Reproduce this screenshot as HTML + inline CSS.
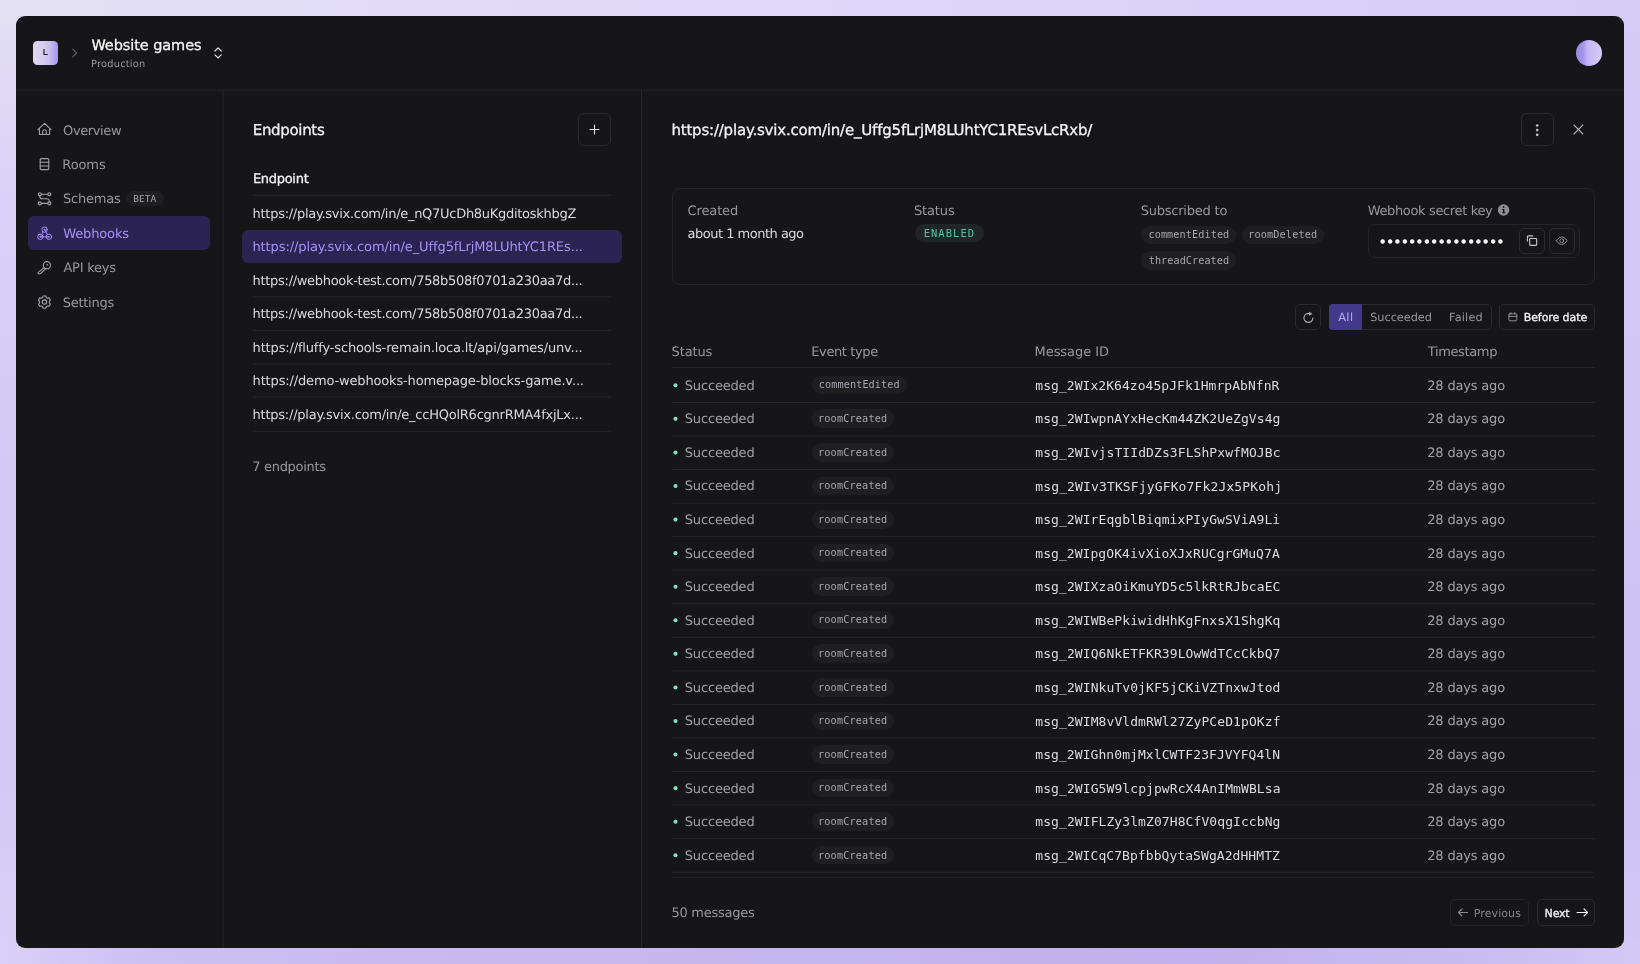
<!DOCTYPE html>
<html lang="en">
<head>
<meta charset="utf-8">
<title>Webhooks – Website games</title>
<style>
*{box-sizing:border-box;margin:0;padding:0}
html,body{width:1640px;height:964px;overflow:hidden}
body{
  font-family:"DejaVu Sans","Liberation Sans",sans-serif;font-size:13px;color:#e0e0e4;
  background:
    linear-gradient(90deg,#e3e0f4 0%,#e1dbf8 25%,#dfd8f9 49%,#d9cef7 85%,#d7ccf6 100%) no-repeat 0 0/100% 24px,
    linear-gradient(90deg,#d9d0f7 0%,#ccc0f3 9%,#c8baee 24%,#c4b6ee 49%,#c1b1ee 73%,#c9bdf1 91.5%,#d4c9f4 100%) no-repeat 0 100%/100% 24px,
    linear-gradient(180deg,#e3e0f4 0%,#dbd0f8 21%,#d4c9f4 49%,#d3c8f4 78%,#d9d0f7 100%) no-repeat 0 0/24px 100%,
    linear-gradient(180deg,#d7ccf6 0%,#d4c9f4 20%,#d1c5f4 50%,#cdc1f3 79%,#d0c5f4 92%,#d4c9f4 100%) no-repeat 100% 0/24px 100%,
    #161618;
  position:relative;
}
.abs{position:absolute}
#app{position:absolute;left:16px;top:16px;width:1608px;height:932px;background:#161618;border-radius:9px;overflow:hidden}
#pg{position:absolute;left:-16px;top:-16px;width:1640px;height:964px;will-change:transform}
.t{position:absolute;white-space:nowrap;line-height:20px;height:20px;text-rendering:geometricPrecision}
.hline{position:absolute;height:1px;background:#252528}
.vline{position:absolute;width:1px;background:#252528}
.mono{font-family:"DejaVu Sans Mono","Liberation Mono",monospace;text-rendering:auto}
.btn{position:absolute;border:1px solid #2b2b2f;border-radius:6px}
.pill{position:absolute;border-radius:10px;background:#1f1f22}
.pt{position:absolute;white-space:nowrap;line-height:20px;height:20px;font-family:"DejaVu Sans Mono","Liberation Mono",monospace;font-size:10.2px;color:#b0b0b6}
.dot{position:absolute;left:673.2px;width:4.4px;height:4.4px;border-radius:50%;background:#7ee2c4}
svg{position:absolute;overflow:visible}
</style>
</head>
<body>
<div id="app"><div id="pg">

<div class="abs" style="left:33.2px;top:40.7px;width:24.7px;height:24.3px;border-radius:4.5px;background:linear-gradient(90deg,#dcd7ee 0%,#d6cdf0 40%,#c9bdee 66%,#a693f2 100%)"></div>
<div class="t" style="left:33.5px;top:42px;width:24px;text-align:center;font-family:'Liberation Sans',sans-serif;font-size:8.8px;font-weight:700;color:#2a2a2e">L</div>
<div class="abs" style="left:1576px;top:40px;width:26px;height:26px;border-radius:50%;background:linear-gradient(90deg,#9c8be9 0%,#a092ea 25%,#c3b5f3 45%,#cdc2f6 75%,#d6cdf8 100%)"></div>
<div class="abs" style="left:28px;top:216px;width:182px;height:34px;border-radius:6px;background:#2b2352"></div>
<div class="abs" style="left:126px;top:191px;width:38px;height:15px;border-radius:8px;background:#1f1f22"></div>
<div class="btn" style="left:578px;top:113px;width:33px;height:33px"></div>
<div class="abs" style="left:242px;top:230px;width:380px;height:33px;border-radius:6px;background:#2b2352"></div>
<div class="btn" style="left:1521px;top:113px;width:33px;height:33px"></div>
<div class="abs" style="left:672px;top:188px;width:923px;height:97px;border:1px solid #252528;border-radius:8px"></div>
<div class="abs" style="left:914.5px;top:224px;width:69px;height:18.4px;border-radius:10px;background:#222527"></div>
<div class="abs" style="left:1368px;top:224px;width:212px;height:34px;border:1px solid #252528;border-radius:7px"></div>
<div class="btn" style="left:1519px;top:228px;width:26px;height:26px;border-radius:5px"></div>
<div class="btn" style="left:1549px;top:228px;width:26px;height:26px;border-radius:5px"></div>
<div class="t" id="bullets" style="left:1379.8px;top:232px;font-family:'Liberation Sans',sans-serif;font-size:16.5px;letter-spacing:1.585px;color:#fafafa">•••••••••••••••••</div>
<div class="btn" style="left:1295px;top:304px;width:26px;height:26px;border-radius:5px"></div>
<div class="btn" style="left:1328.5px;top:304px;width:163px;height:26px;border-radius:5px"></div><div class="abs" style="left:1329px;top:304px;width:32.7px;height:26px;border-radius:4px 0 0 4px;background:#43398a"></div>
<div class="btn" style="left:1499px;top:304px;width:96px;height:26px;border-radius:5px"></div>
<div class="btn" style="left:1450px;top:899px;width:79px;height:27px;border-radius:5px;border-color:#242427"></div>
<div class="btn" style="left:1537px;top:899px;width:58px;height:27px;border-radius:5px"></div>
<svg style="left:0;top:0" width="1640" height="964" viewBox="0 0 1640 964"><rect x="16" y="89.2" width="1608" height="2" fill="#1f1f22"/><rect x="222.1" y="91" width="2" height="857" fill="#1f1f22"/><rect x="641" y="90.5" width="1" height="857.5" fill="#252528"/><rect x="253" y="194.80" width="358" height="1" fill="#27272a"/><rect x="253" y="296.30" width="358" height="1" fill="#27272a"/><rect x="253" y="329.90" width="358" height="1" fill="#27272a"/><rect x="253" y="363.50" width="358" height="1" fill="#27272a"/><rect x="253" y="396.60" width="358" height="1" fill="#27272a"/><rect x="253" y="430.80" width="358" height="1" fill="#27272a"/><rect x="671.7" y="367.00" width="923.3" height="1" fill="#27272a"/><rect x="671.7" y="401.95" width="923.3" height="1" fill="#27272a"/><rect x="671.7" y="435.50" width="923.3" height="1" fill="#27272a"/><rect x="671.7" y="469.06" width="923.3" height="1" fill="#27272a"/><rect x="671.7" y="502.62" width="923.3" height="1" fill="#27272a"/><rect x="671.7" y="536.17" width="923.3" height="1" fill="#27272a"/><rect x="671.7" y="569.73" width="923.3" height="1" fill="#27272a"/><rect x="671.7" y="603.28" width="923.3" height="1" fill="#27272a"/><rect x="671.7" y="636.84" width="923.3" height="1" fill="#27272a"/><rect x="671.7" y="670.39" width="923.3" height="1" fill="#27272a"/><rect x="671.7" y="703.94" width="923.3" height="1" fill="#27272a"/><rect x="671.7" y="737.50" width="923.3" height="1" fill="#27272a"/><rect x="671.7" y="771.06" width="923.3" height="1" fill="#27272a"/><rect x="671.7" y="804.61" width="923.3" height="1" fill="#27272a"/><rect x="671.7" y="838.16" width="923.3" height="1" fill="#27272a"/><rect x="671.7" y="871.72" width="923.3" height="1" fill="#27272a"/><rect x="671.7" y="876.90" width="923.3" height="1" fill="#27272a"/></svg>
<svg style="left:0;top:0" width="1640" height="964" viewBox="0 0 1640 964" fill="#7ee2c4"><circle cx="675.5" cy="385.30" r="2.05"/><circle cx="675.5" cy="418.87" r="2.05"/><circle cx="675.5" cy="452.44" r="2.05"/><circle cx="675.5" cy="486.01" r="2.05"/><circle cx="675.5" cy="519.58" r="2.05"/><circle cx="675.5" cy="553.15" r="2.05"/><circle cx="675.5" cy="586.72" r="2.05"/><circle cx="675.5" cy="620.29" r="2.05"/><circle cx="675.5" cy="653.86" r="2.05"/><circle cx="675.5" cy="687.43" r="2.05"/><circle cx="675.5" cy="721.00" r="2.05"/><circle cx="675.5" cy="754.57" r="2.05"/><circle cx="675.5" cy="788.14" r="2.05"/><circle cx="675.5" cy="821.71" r="2.05"/><circle cx="675.5" cy="855.28" r="2.05"/></svg>
<div class="pill" style="left:1141.3px;top:225.5px;width:94.7px;height:18.5px"></div>
<div class="pill" style="left:1242.0px;top:225.5px;width:82.4px;height:18.5px"></div>
<div class="pill" style="left:1141.3px;top:251.0px;width:94.7px;height:18.5px"></div>
<div class="pill" style="left:811.8px;top:375.8px;width:95.0px;height:18.6px"></div>
<div class="pill" style="left:811.8px;top:409.4px;width:82.2px;height:18.6px"></div>
<div class="pill" style="left:811.8px;top:443.0px;width:82.2px;height:18.6px"></div>
<div class="pill" style="left:811.8px;top:476.5px;width:82.2px;height:18.6px"></div>
<div class="pill" style="left:811.8px;top:510.1px;width:82.2px;height:18.6px"></div>
<div class="pill" style="left:811.8px;top:543.7px;width:82.2px;height:18.6px"></div>
<div class="pill" style="left:811.8px;top:577.3px;width:82.2px;height:18.6px"></div>
<div class="pill" style="left:811.8px;top:610.9px;width:82.2px;height:18.6px"></div>
<div class="pill" style="left:811.8px;top:644.4px;width:82.2px;height:18.6px"></div>
<div class="pill" style="left:811.8px;top:678.0px;width:82.2px;height:18.6px"></div>
<div class="pill" style="left:811.8px;top:711.6px;width:82.2px;height:18.6px"></div>
<div class="pill" style="left:811.8px;top:745.2px;width:82.2px;height:18.6px"></div>
<div class="pill" style="left:811.8px;top:778.8px;width:82.2px;height:18.6px"></div>
<div class="pill" style="left:811.8px;top:812.3px;width:82.2px;height:18.6px"></div>
<div class="pill" style="left:811.8px;top:845.9px;width:82.2px;height:18.6px"></div>
<div class="t" id="htitle" style="left:91.38px;top:36.01px;font-size:14.5px;color:#f4f4f5;letter-spacing:-0.077px;-webkit-text-stroke:.3px currentColor;">Website games</div>
<div class="t" id="hsub" style="left:91.10px;top:55.01px;font-size:9.8px;color:#97979e;letter-spacing:0.213px;">Production</div>
<div class="t" id="n1" style="left:63.04px;top:122.01px;font-size:13px;color:#97979e;letter-spacing:-0.387px;">Overview</div>
<div class="t" id="n2" style="left:62.35px;top:156.00px;font-size:13px;color:#97979e;letter-spacing:-0.111px;">Rooms</div>
<div class="t" id="n3" style="left:63.01px;top:190.01px;font-size:13px;color:#97979e;letter-spacing:-0.229px;">Schemas</div>
<div class="t mono" id="beta" style="left:133.13px;top:189.01px;font-size:9.5px;color:#a1a1aa;letter-spacing:0.112px;">BETA</div>
<div class="t" id="n4" style="left:63.16px;top:225.01px;font-size:13px;color:#a792f8;letter-spacing:-0.118px;">Webhooks</div>
<div class="t" id="n5" style="left:63.45px;top:259.01px;font-size:13px;color:#97979e;letter-spacing:-0.230px;">API keys</div>
<div class="t" id="n6" style="left:62.68px;top:294.01px;font-size:13px;color:#97979e;letter-spacing:-0.259px;">Settings</div>
<div class="t" id="eptitle" style="left:252.77px;top:120.00px;font-size:15px;color:#f4f4f5;letter-spacing:-0.327px;-webkit-text-stroke:.3px currentColor;">Endpoints</div>
<div class="t" id="ephdr" style="left:252.95px;top:170.01px;font-size:13px;color:#f4f4f5;letter-spacing:-0.296px;-webkit-text-stroke:.3px currentColor;">Endpoint</div>
<div class="t" id="ep0" style="left:252.60px;top:205.01px;font-size:13px;color:#dadade;letter-spacing:-0.282px;">https://play.svix.com/in/e_nQ7UcDh8uKgditoskhbgZ</div>
<div class="t" id="ep1" style="left:252.42px;top:238.01px;font-size:13px;color:#a792f8;letter-spacing:-0.092px;">https://play.svix.com/in/e_Uffg5fLrjM8LUhtYC1REs...</div>
<div class="t" id="ep2" style="left:252.60px;top:272.01px;font-size:13px;color:#dadade;letter-spacing:-0.301px;">https://webhook-test.com/758b508f0701a230aa7d...</div>
<div class="t" id="ep3" style="left:252.60px;top:305.01px;font-size:13px;color:#dadade;letter-spacing:-0.301px;">https://webhook-test.com/758b508f0701a230aa7d...</div>
<div class="t" id="ep4" style="left:252.60px;top:339.01px;font-size:13px;color:#dadade;letter-spacing:-0.161px;">https://fluffy-schools-remain.loca.lt/api/games/unv...</div>
<div class="t" id="ep5" style="left:252.60px;top:372.01px;font-size:13px;color:#dadade;letter-spacing:-0.154px;">https://demo-webhooks-homepage-blocks-game.v...</div>
<div class="t" id="ep6" style="left:252.60px;top:406.01px;font-size:13px;color:#dadade;letter-spacing:-0.237px;">https://play.svix.com/in/e_ccHQolR6cgnrRMA4fxjLx...</div>
<div class="t" id="epcount" style="left:252.18px;top:458.01px;font-size:13px;color:#97979e;letter-spacing:-0.296px;">7 endpoints</div>
<div class="t" id="dtitle" style="left:671.42px;top:120.01px;font-size:15px;color:#f4f4f5;letter-spacing:-0.198px;-webkit-text-stroke:.3px currentColor;">https://play.svix.com/in/e_Uffg5fLrjM8LUhtYC1REsvLcRxb/</div>
<div class="t" id="c1" style="left:687.52px;top:202.01px;font-size:13px;color:#97979e;letter-spacing:-0.119px;">Created</div>
<div class="t" id="c1v" style="left:687.47px;top:225.01px;font-size:13px;color:#dadade;letter-spacing:-0.496px;">about 1 month ago</div>
<div class="t" id="c2" style="left:913.91px;top:202.01px;font-size:13px;color:#97979e;letter-spacing:-0.131px;">Status</div>
<div class="t mono" id="enabled" style="left:923.64px;top:223.00px;font-size:10.5px;color:#5cbf9f;letter-spacing:1.029px;">ENABLED</div>
<div class="t" id="c3" style="left:1140.68px;top:202.01px;font-size:13px;color:#97979e;letter-spacing:-0.218px;">Subscribed to</div>
<div class="t" id="c4" style="left:1367.65px;top:202.01px;font-size:13px;color:#97979e;letter-spacing:-0.354px;">Webhook secret key</div>
<div class="t" id="fall" style="left:1338.18px;top:308.01px;font-size:11.3px;color:#b9a9ff;letter-spacing:0.425px;">All</div>
<div class="t" id="fsuc" style="left:1370.20px;top:308.01px;font-size:11.3px;color:#97979e;letter-spacing:-0.032px;">Succeeded</div>
<div class="t" id="ffail" style="left:1449.02px;top:308.01px;font-size:11.3px;color:#97979e;letter-spacing:0.175px;">Failed</div>
<div class="t" id="fdate" style="left:1523.70px;top:308.00px;font-size:11px;color:#f4f4f5;letter-spacing:-0.080px;-webkit-text-stroke:.3px currentColor;">Before date</div>
<div class="t" id="th1" style="left:671.59px;top:343.01px;font-size:13px;color:#97979e;letter-spacing:-0.148px;">Status</div>
<div class="t" id="th2" style="left:811.31px;top:343.01px;font-size:13px;color:#97979e;letter-spacing:-0.393px;">Event type</div>
<div class="t" id="th3" style="left:1034.53px;top:343.01px;font-size:13px;color:#97979e;letter-spacing:-0.047px;">Message ID</div>
<div class="t" id="th4" style="left:1427.74px;top:343.01px;font-size:13px;color:#97979e;letter-spacing:-0.359px;">Timestamp</div>
<div class="t" id="rs0" style="left:684.80px;top:377.01px;font-size:13px;color:#a0a0a6;letter-spacing:-0.174px;">Succeeded</div>
<div class="t mono" id="rm0" style="left:1035.26px;top:376.01px;font-size:13px;color:#dcdce0;letter-spacing:0.052px;">msg_2WIx2K64zo45pJFk1HmrpAbNfnR</div>
<div class="t" id="rt0" style="left:1427.26px;top:377.01px;font-size:13px;color:#a0a0a6;letter-spacing:-0.178px;">28 days ago</div>
<div class="t" id="rs1" style="left:684.80px;top:410.01px;font-size:13px;color:#a0a0a6;letter-spacing:-0.174px;">Succeeded</div>
<div class="t mono" id="rm1" style="left:1035.26px;top:409.01px;font-size:13px;color:#dcdce0;letter-spacing:0.085px;">msg_2WIwpnAYxHecKm44ZK2UeZgVs4g</div>
<div class="t" id="rt1" style="left:1427.26px;top:410.01px;font-size:13px;color:#a0a0a6;letter-spacing:-0.178px;">28 days ago</div>
<div class="t" id="rs2" style="left:684.80px;top:444.00px;font-size:13px;color:#a0a0a6;letter-spacing:-0.174px;">Succeeded</div>
<div class="t mono" id="rm2" style="left:1035.26px;top:443.01px;font-size:13px;color:#dcdce0;letter-spacing:0.088px;">msg_2WIvjsTIIdDZs3FLShPxwfMOJBc</div>
<div class="t" id="rt2" style="left:1427.26px;top:444.00px;font-size:13px;color:#a0a0a6;letter-spacing:-0.178px;">28 days ago</div>
<div class="t" id="rs3" style="left:684.80px;top:477.01px;font-size:13px;color:#a0a0a6;letter-spacing:-0.174px;">Succeeded</div>
<div class="t mono" id="rm3" style="left:1035.26px;top:477.01px;font-size:13px;color:#dcdce0;letter-spacing:0.137px;">msg_2WIv3TKSFjyGFKo7Fk2Jx5PKohj</div>
<div class="t" id="rt3" style="left:1427.26px;top:477.01px;font-size:13px;color:#a0a0a6;letter-spacing:-0.178px;">28 days ago</div>
<div class="t" id="rs4" style="left:684.80px;top:511.00px;font-size:13px;color:#a0a0a6;letter-spacing:-0.174px;">Succeeded</div>
<div class="t mono" id="rm4" style="left:1035.26px;top:510.01px;font-size:13px;color:#dcdce0;letter-spacing:0.077px;">msg_2WIrEqgblBiqmixPIyGwSViA9Li</div>
<div class="t" id="rt4" style="left:1427.26px;top:511.00px;font-size:13px;color:#a0a0a6;letter-spacing:-0.178px;">28 days ago</div>
<div class="t" id="rs5" style="left:684.80px;top:545.00px;font-size:13px;color:#a0a0a6;letter-spacing:-0.174px;">Succeeded</div>
<div class="t mono" id="rm5" style="left:1035.26px;top:544.00px;font-size:13px;color:#dcdce0;letter-spacing:0.061px;">msg_2WIpgOK4ivXioXJxRUCgrGMuQ7A</div>
<div class="t" id="rt5" style="left:1427.26px;top:545.00px;font-size:13px;color:#a0a0a6;letter-spacing:-0.178px;">28 days ago</div>
<div class="t" id="rs6" style="left:684.80px;top:578.00px;font-size:13px;color:#a0a0a6;letter-spacing:-0.174px;">Succeeded</div>
<div class="t mono" id="rm6" style="left:1035.26px;top:577.00px;font-size:13px;color:#dcdce0;letter-spacing:0.084px;">msg_2WIXzaOiKmuYD5c5lkRtRJbcaEC</div>
<div class="t" id="rt6" style="left:1427.26px;top:578.00px;font-size:13px;color:#a0a0a6;letter-spacing:-0.178px;">28 days ago</div>
<div class="t" id="rs7" style="left:684.80px;top:612.01px;font-size:13px;color:#a0a0a6;letter-spacing:-0.174px;">Succeeded</div>
<div class="t mono" id="rm7" style="left:1035.26px;top:611.00px;font-size:13px;color:#dcdce0;letter-spacing:0.085px;">msg_2WIWBePkiwidHhKgFnxsX1ShgKq</div>
<div class="t" id="rt7" style="left:1427.26px;top:612.01px;font-size:13px;color:#a0a0a6;letter-spacing:-0.178px;">28 days ago</div>
<div class="t" id="rs8" style="left:684.80px;top:645.01px;font-size:13px;color:#a0a0a6;letter-spacing:-0.174px;">Succeeded</div>
<div class="t mono" id="rm8" style="left:1035.26px;top:644.00px;font-size:13px;color:#dcdce0;letter-spacing:0.085px;">msg_2WIQ6NkETFKR39LOwWdTCcCkbQ7</div>
<div class="t" id="rt8" style="left:1427.26px;top:645.01px;font-size:13px;color:#a0a0a6;letter-spacing:-0.178px;">28 days ago</div>
<div class="t" id="rs9" style="left:684.80px;top:679.01px;font-size:13px;color:#a0a0a6;letter-spacing:-0.174px;">Succeeded</div>
<div class="t mono" id="rm9" style="left:1035.26px;top:678.01px;font-size:13px;color:#dcdce0;letter-spacing:0.085px;">msg_2WINkuTv0jKF5jCKiVZTnxwJtod</div>
<div class="t" id="rt9" style="left:1427.26px;top:679.01px;font-size:13px;color:#a0a0a6;letter-spacing:-0.178px;">28 days ago</div>
<div class="t" id="rs10" style="left:684.80px;top:712.01px;font-size:13px;color:#a0a0a6;letter-spacing:-0.174px;">Succeeded</div>
<div class="t mono" id="rm10" style="left:1035.26px;top:712.01px;font-size:13px;color:#dcdce0;letter-spacing:0.086px;">msg_2WIM8vVldmRWl27ZyPCeD1pOKzf</div>
<div class="t" id="rt10" style="left:1427.26px;top:712.01px;font-size:13px;color:#a0a0a6;letter-spacing:-0.178px;">28 days ago</div>
<div class="t" id="rs11" style="left:684.80px;top:746.01px;font-size:13px;color:#a0a0a6;letter-spacing:-0.174px;">Succeeded</div>
<div class="t mono" id="rm11" style="left:1035.26px;top:745.01px;font-size:13px;color:#dcdce0;letter-spacing:0.074px;">msg_2WIGhn0mjMxlCWTF23FJVYFQ4lN</div>
<div class="t" id="rt11" style="left:1427.26px;top:746.01px;font-size:13px;color:#a0a0a6;letter-spacing:-0.178px;">28 days ago</div>
<div class="t" id="rs12" style="left:684.80px;top:780.00px;font-size:13px;color:#a0a0a6;letter-spacing:-0.174px;">Succeeded</div>
<div class="t mono" id="rm12" style="left:1035.26px;top:779.01px;font-size:13px;color:#dcdce0;letter-spacing:0.087px;">msg_2WIG5W9lcpjpwRcX4AnIMmWBLsa</div>
<div class="t" id="rt12" style="left:1427.26px;top:780.00px;font-size:13px;color:#a0a0a6;letter-spacing:-0.178px;">28 days ago</div>
<div class="t" id="rs13" style="left:684.80px;top:813.00px;font-size:13px;color:#a0a0a6;letter-spacing:-0.174px;">Succeeded</div>
<div class="t mono" id="rm13" style="left:1035.26px;top:812.00px;font-size:13px;color:#dcdce0;letter-spacing:0.085px;">msg_2WIFLZy3lmZ07H8CfV0qgIccbNg</div>
<div class="t" id="rt13" style="left:1427.26px;top:813.00px;font-size:13px;color:#a0a0a6;letter-spacing:-0.178px;">28 days ago</div>
<div class="t" id="rs14" style="left:684.80px;top:847.00px;font-size:13px;color:#a0a0a6;letter-spacing:-0.174px;">Succeeded</div>
<div class="t mono" id="rm14" style="left:1035.26px;top:846.00px;font-size:13px;color:#dcdce0;letter-spacing:0.066px;">msg_2WICqC7BpfbbQytaSWgA2dHHMTZ</div>
<div class="t" id="rt14" style="left:1427.26px;top:847.00px;font-size:13px;color:#a0a0a6;letter-spacing:-0.178px;">28 days ago</div>
<div class="t" id="count" style="left:671.48px;top:904.01px;font-size:13px;color:#97979e;letter-spacing:-0.263px;">50 messages</div>
<div class="t" id="prev" style="left:1473.80px;top:904.01px;font-size:11px;color:#85858e;letter-spacing:0.085px;">Previous</div>
<div class="t" id="next" style="left:1544.62px;top:904.01px;font-size:11px;color:#f4f4f5;letter-spacing:-0.207px;-webkit-text-stroke:.3px currentColor;">Next</div>
<div class="t mono" id="p1" style="left:1148.45px;top:225.01px;font-size:10.2px;color:#a6a6ac;letter-spacing:0.089px;">commentEdited</div>
<div class="t mono" id="p2" style="left:1248.20px;top:225.01px;font-size:10.2px;color:#a6a6ac;letter-spacing:0.145px;">roomDeleted</div>
<div class="t mono" id="p3" style="left:1148.69px;top:251.01px;font-size:10.2px;color:#a6a6ac;letter-spacing:0.059px;">threadCreated</div>
<div class="t mono" id="rp0" style="left:818.77px;top:375.01px;font-size:10.2px;color:#a6a6ac;letter-spacing:0.098px;">commentEdited</div>
<div class="t mono" id="rp1" style="left:817.97px;top:409.01px;font-size:10.2px;color:#a6a6ac;letter-spacing:0.173px;">roomCreated</div>
<div class="t mono" id="rp2" style="left:817.97px;top:443.00px;font-size:10.2px;color:#a6a6ac;letter-spacing:0.173px;">roomCreated</div>
<div class="t mono" id="rp3" style="left:817.97px;top:476.00px;font-size:10.2px;color:#a6a6ac;letter-spacing:0.173px;">roomCreated</div>
<div class="t mono" id="rp4" style="left:817.97px;top:510.00px;font-size:10.2px;color:#a6a6ac;letter-spacing:0.173px;">roomCreated</div>
<div class="t mono" id="rp5" style="left:817.97px;top:543.01px;font-size:10.2px;color:#a6a6ac;letter-spacing:0.173px;">roomCreated</div>
<div class="t mono" id="rp6" style="left:817.97px;top:577.01px;font-size:10.2px;color:#a6a6ac;letter-spacing:0.173px;">roomCreated</div>
<div class="t mono" id="rp7" style="left:817.97px;top:610.01px;font-size:10.2px;color:#a6a6ac;letter-spacing:0.173px;">roomCreated</div>
<div class="t mono" id="rp8" style="left:817.97px;top:644.01px;font-size:10.2px;color:#a6a6ac;letter-spacing:0.173px;">roomCreated</div>
<div class="t mono" id="rp9" style="left:817.97px;top:678.00px;font-size:10.2px;color:#a6a6ac;letter-spacing:0.173px;">roomCreated</div>
<div class="t mono" id="rp10" style="left:817.97px;top:711.01px;font-size:10.2px;color:#a6a6ac;letter-spacing:0.173px;">roomCreated</div>
<div class="t mono" id="rp11" style="left:817.97px;top:745.00px;font-size:10.2px;color:#a6a6ac;letter-spacing:0.173px;">roomCreated</div>
<div class="t mono" id="rp12" style="left:817.97px;top:778.00px;font-size:10.2px;color:#a6a6ac;letter-spacing:0.173px;">roomCreated</div>
<div class="t mono" id="rp13" style="left:817.97px;top:812.00px;font-size:10.2px;color:#a6a6ac;letter-spacing:0.173px;">roomCreated</div>
<div class="t mono" id="rp14" style="left:817.97px;top:846.01px;font-size:10.2px;color:#a6a6ac;letter-spacing:0.173px;">roomCreated</div>
<!-- ICONS -->
<svg id="icons" style="left:0;top:0" width="1640" height="964" viewBox="0 0 1640 964" fill="none" stroke-linecap="round" stroke-linejoin="round">
<g stroke="#a1a1aa" stroke-width="1.1">
  <!-- home -->
  <path d="M37.9 129.7 L44.5 123.4 L51.1 129.7 M39.4 128.4 V134.5 H49.6 V128.4 M42.7 134.5 V131.6 a1.8 1.8 0 0 1 3.6 0 V134.5"/>
  <!-- rooms -->
  <rect x="40.2" y="158.6" width="8.6" height="11" rx="1"/>
  <path d="M40.2 162.3 H48.8 M40.2 166 H48.8"/>
  <!-- schemas -->
  <circle cx="39.8" cy="194.2" r="1.5"/><circle cx="49.3" cy="194.2" r="1.5"/><circle cx="39.8" cy="203.4" r="1.5"/><circle cx="49.3" cy="203.4" r="1.5"/>
  <path d="M41.3 194.2 H47.8 M41.3 203.4 H47.8 M39.8 195.7 v0.8 a2.3 2.3 0 0 0 2.3 2.3 h4.9 a2.3 2.3 0 0 1 2.3 2.3 v0.8"/>
  <!-- key -->
  <circle cx="46.9" cy="265.2" r="3.6"/>
  <path d="M44.2 267.6 L38.2 272.4 V273.7 H40.4 L45.9 268.6"/>
  <!-- gear -->
  <path d="M46.24 297.43 L45.76 295.94 L43.14 295.94 L42.66 297.43 L41.30 298.21 L39.77 297.88 L38.46 300.15 L39.51 301.32 L39.51 302.88 L38.46 304.05 L39.77 306.32 L41.30 305.99 L42.66 306.77 L43.14 308.26 L45.76 308.26 L46.24 306.77 L47.60 305.99 L49.13 306.32 L50.44 304.05 L49.39 302.88 L49.39 301.32 L50.44 300.15 L49.13 297.88 L47.60 298.21 Z"/>
  <circle cx="44.45" cy="302.1" r="2.2"/>
</g>
<circle cx="47.3" cy="264.8" r="0.8" fill="#a1a1aa"/>
<!-- webhooks (active) -->
<g stroke="#a792f8" stroke-width="1">
  <circle cx="44.6" cy="229.6" r="2.7"/><circle cx="40.4" cy="236.8" r="2.7"/><circle cx="48.9" cy="236.8" r="2.7"/>
  <path d="M45 230.3 L47.4 234.4 M41.2 236.8 H48.1 M43.2 232 L40.8 236"/>
</g>
<g fill="#a792f8"><circle cx="44.6" cy="229.6" r="0.9"/><circle cx="40.4" cy="236.8" r="0.9"/><circle cx="48.9" cy="236.8" r="0.9"/></g>
<!-- header chevrons -->
<path d="M72.8 49.2 L76.6 53 L72.8 56.8" stroke="#5f5f68" stroke-width="1.1"/>
<path d="M215 51 L218.1 47.9 L221.2 51 M215 54.8 L218.1 57.9 L221.2 54.8" stroke="#e4e4e7" stroke-width="1.2"/>
<!-- plus -->
<path d="M594.5 125 V134 M590 129.5 H599" stroke="#e4e4e7" stroke-width="1.1"/>
<!-- kebab -->
<g fill="#c2c2c6"><circle cx="1537.2" cy="125.5" r="1.35"/><circle cx="1537.2" cy="130.1" r="1.35"/><circle cx="1537.2" cy="134.8" r="1.35"/></g>
<!-- close -->
<path d="M1574 125.1 L1582.8 133.9 M1582.8 125.1 L1574 133.9" stroke="#b8b8bd" stroke-width="1.2"/>
<!-- info -->
<circle cx="1503.6" cy="210" r="5.7" fill="#8e8e96"/>
<rect x="1502.9" y="209" width="1.5" height="4" fill="#161618"/><rect x="1502.2" y="209" width="1.6" height="1" fill="#161618"/><rect x="1502.2" y="212.3" width="3" height="1" fill="#161618"/>
<circle cx="1503.6" cy="207.2" r="0.9" fill="#161618"/>
<!-- copy -->
<g stroke="#c8c8cc" stroke-width="1.1">
  <rect x="1529.7" y="238.5" width="7" height="6.9" rx="0.8"/>
  <path d="M1527.4 241 V236.8 a0.9 0.9 0 0 1 .9 -.9 H1532.8"/>
</g>
<!-- eye -->
<g stroke="#8e8e96" stroke-width="1">
  <path d="M1556.4 240.7 C1558.2 237.9 1559.9 237 1561.7 237 C1563.5 237 1565.2 237.9 1567 240.7 C1565.2 243.5 1563.5 244.4 1561.7 244.4 C1559.9 244.4 1558.2 243.5 1556.4 240.7 Z"/>
  <circle cx="1561.7" cy="240.7" r="1.9"/>
</g>
<!-- refresh -->
<path d="M1312.9 317.9 A4.5 4.5 0 1 1 1309.7 313.6" stroke="#a8a8b0" stroke-width="1.1"/>
<path d="M1309.2 311.4 L1312.4 313.9 L1308.9 315.7 Z" fill="#a8a8b0"/>
<!-- calendar -->
<g stroke="#8e8e96" stroke-width="1">
  <rect x="1508.9" y="313.8" width="7.9" height="7" rx="0.9"/>
  <path d="M1508.9 316.4 H1516.8 M1510.9 312.6 V314.2 M1514.8 312.6 V314.2"/>
</g>
<!-- prev arrow -->
<path d="M1467.5 912.5 H1458.5 M1462 909 L1458.5 912.5 L1462 916" stroke="#8a8a93" stroke-width="1.1"/>
<!-- next arrow -->
<path d="M1577 912.5 H1587.5 M1584 909 L1587.5 912.5 L1584 916" stroke="#fafafa" stroke-width="1.1"/>
</svg>
</div></div>
</body>
</html>
